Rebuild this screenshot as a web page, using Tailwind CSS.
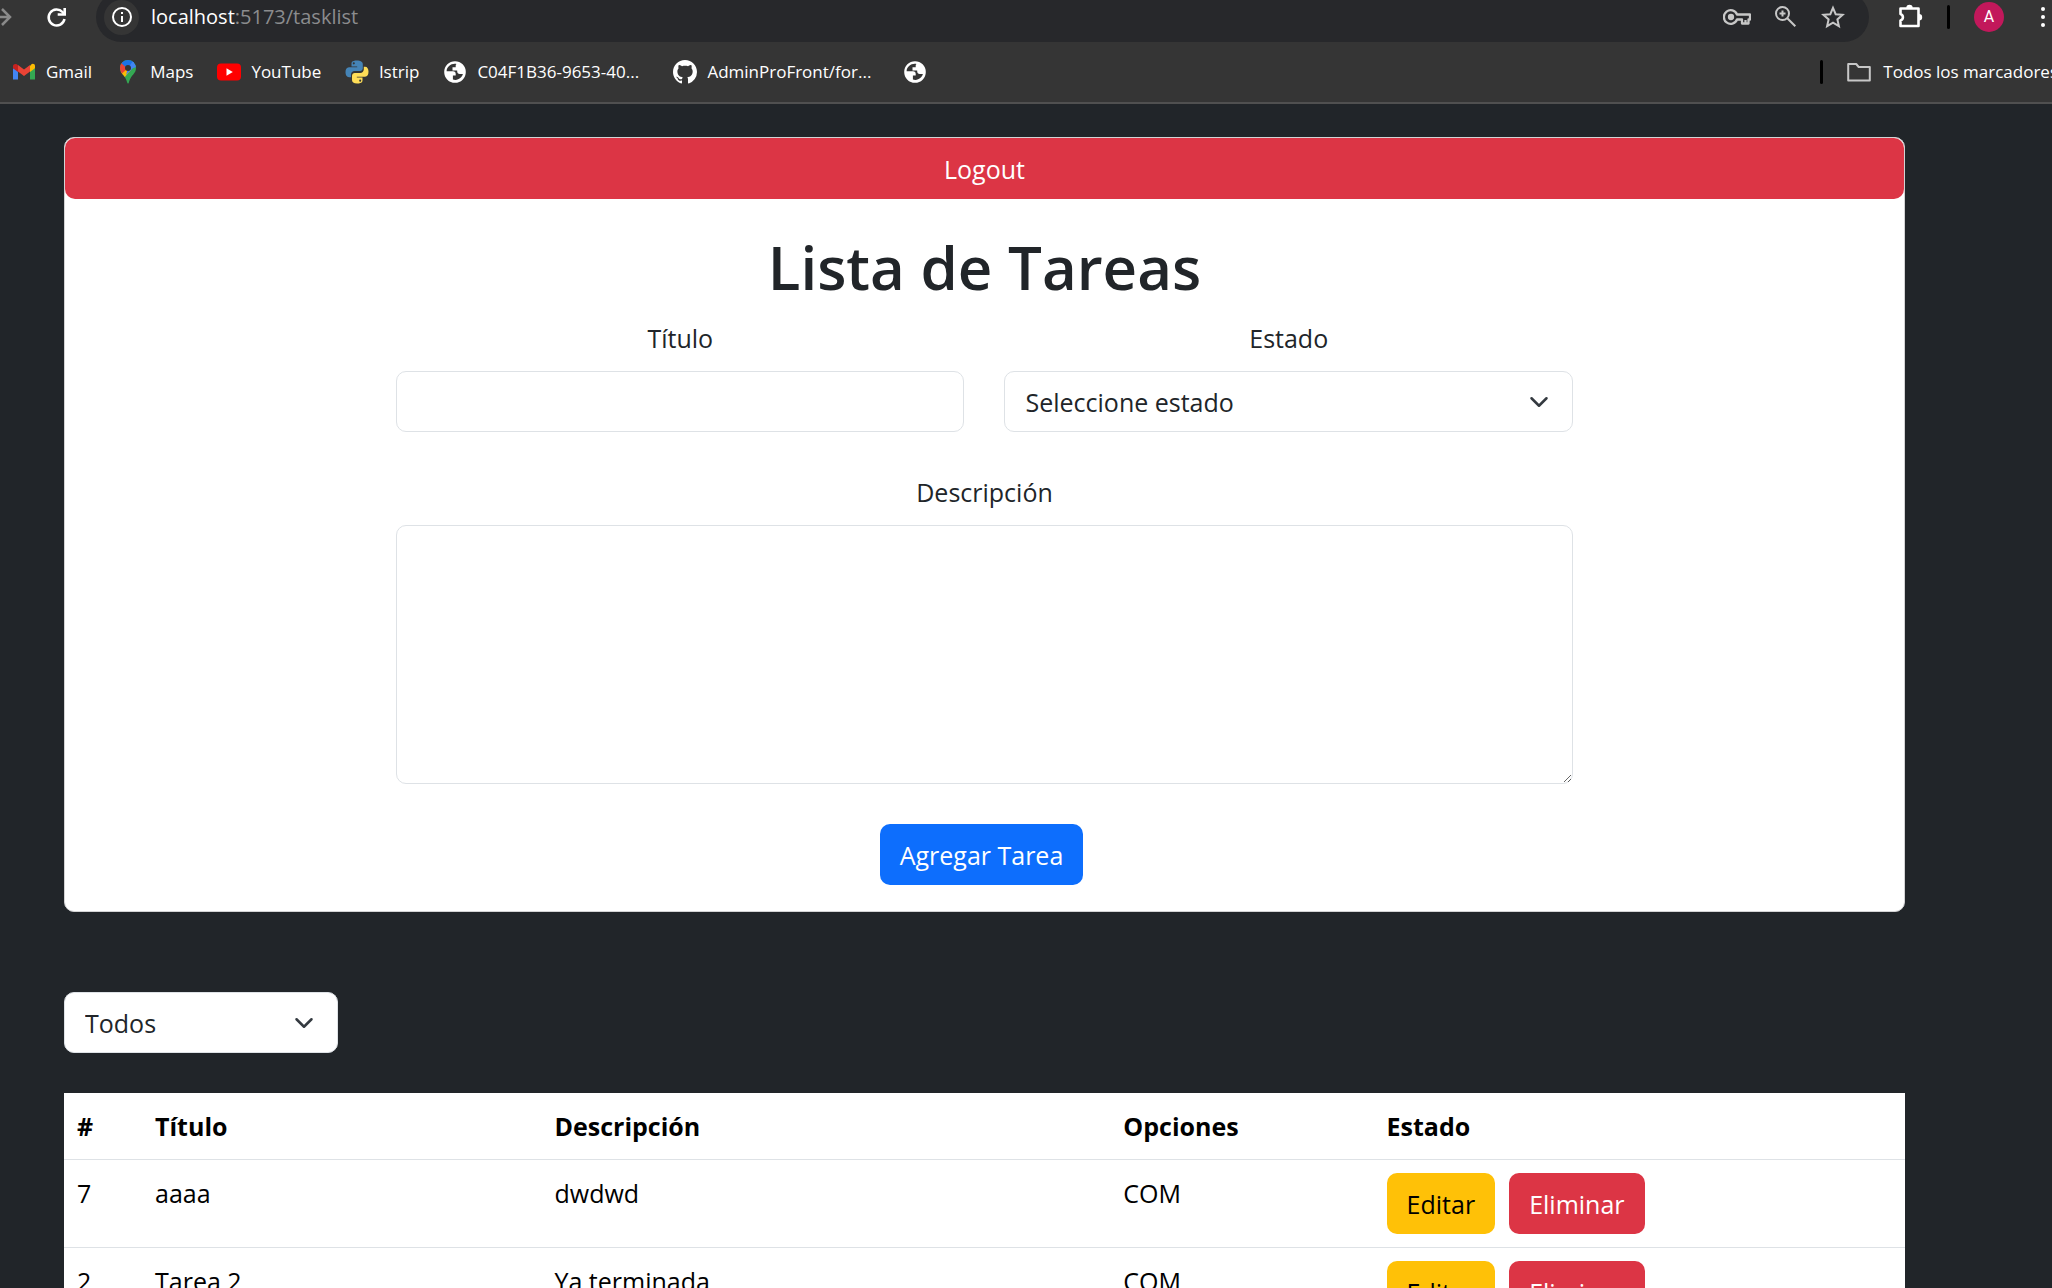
<!DOCTYPE html>
<html lang="es">
<head>
<meta charset="utf-8">
<title>Lista de Tareas</title>
<script src="https://cdn.jsdelivr.net/npm/@tailwindcss/browser@4"></script>
</head>
<body class="h-screen overflow-hidden bg-[#212529] font-['Open_Sans','Noto_Sans',sans-serif] text-[25px] leading-10 text-[#212529]">

<svg class="hidden" aria-hidden="true">
  <symbol id="globe" viewBox="0 0 24 24"><path fill="#fff" fill-rule="evenodd" d="M12 1.2a10.8 10.8 0 1 0 0 21.600a10.800 10.800 0 0 0 0-21.600zM3.600 11.200h6.300c1.900 0 2.800.9 2.800 2.700v1.700H9.900v3.900c.9.300 1.800.5 2.700.4 3.500-.2 6.400-2.600 7.300-5.800h-3.200c-1.500 0-2.500-1-2.500-2.500v-1.100H9.500V7.300h3.200V5.200c0-.5.300-1 .9-1.200-5.200-1-9.800 2.500-10 7.200z"/></symbol>
  <symbol id="chevron" viewBox="0 0 16 16"><path fill="none" stroke="#343a40" stroke-linecap="round" stroke-linejoin="round" stroke-width="2" d="m2 5 6 6 6-6"/></symbol>
</svg>

<!-- Browser toolbar -->
<header class="overflow-hidden border-b-2 border-[#505050] bg-[#353535] text-white">
  <div class="-mt-2 flex h-[50px] items-center text-xl">
    <button class="-ml-3 h-6 w-6" aria-label="Adelante"><svg viewBox="0 0 24 24" class="h-6 w-6" fill="none" stroke="#8a8a8a" stroke-width="2.500"><path d="M2 12h20M14 4l8 8-8 8"/></svg></button>
    <button class="ml-8 h-6 w-6" aria-label="Recargar"><svg viewBox="0 0 24 24" class="h-6 w-6" fill="none" stroke="#fff" stroke-width="2.500"><path d="M20.500 14A8 8 0 1 1 18.500 7L20.500 9.500"/><path d="M20.700 3v6.500h-7" stroke-width="2.600"/></svg></button>
    <div class="ml-7 flex h-full flex-1 items-center rounded-full bg-[#27282b] pl-2">
      <button class="flex h-[35px] w-[35px] items-center justify-center rounded-full bg-[#353535]" aria-label="Información del sitio"><svg viewBox="0 0 20 20" class="h-5 w-5" fill="none" stroke="#fff" stroke-width="2"><circle cx="10" cy="10" r="9"/><path d="M10 9v6M10 5v2"/></svg></button>
      <span class="ml-3 flex-1">localhost<span class="text-[#8b8c8e]">:5173/tasklist</span></span>
      <div class="flex items-center gap-6 pr-6 text-[#c7c7c7]">
        <svg viewBox="0 0 28 20" class="h-5 w-7" fill="none" stroke="currentColor" stroke-width="2.300"><path d="M14 7.500A6.800 6.800 0 1 0 14 12.500h5v4h6.500v-4H27v-5H14z" stroke-linejoin="round"/><circle cx="8" cy="10" r="2" fill="currentColor"/><path d="M22.500 16v-3"/></svg>
        <svg viewBox="0 0 22 22" class="h-[22px] w-[22px]" fill="none" stroke="currentColor" stroke-width="2"><circle cx="7.500" cy="7.500" r="6.500"/><path d="m12.300 12.300 8 8M7.500 4.500v6M4.500 7.500h6"/></svg>
        <svg viewBox="0 0 24 24" class="h-6 w-6" fill="none" stroke="currentColor" stroke-width="2"><path d="m12 2.800 2.700 6.400 6.900.6-5.200 4.600 1.500 6.800-5.900-3.600-5.900 3.600 1.500-6.800-5.200-4.600 6.900-.6z"/></svg>
      </div>
    </div>
    <div class="flex items-center pl-7">
      <button class="h-[26px] w-[26px]" aria-label="Extensiones"><svg viewBox="0 0 26 26" class="h-[26px] w-[26px]"><path d="M4 4.500h17.500v17.500H3.500v-5.500a3.400 3.400 0 0 0 0-6.500V4.500z" fill="none" stroke="#fff" stroke-width="2.600" stroke-linejoin="round"/><path fill="#fff" d="M9.300 4a3.200 3.200 0 0 1 6.400 0zM22 10a3.200 3.200 0 0 1 0 6.400z"/></svg></button>
      <span class="ml-6 h-6 w-[3px] rounded-full bg-black"></span>
      <button class="ml-6 flex h-[30px] w-[30px] items-center justify-center rounded-full bg-[#c2185b] font-[Roboto,sans-serif] text-base" aria-label="Perfil">A</button>
      <button class="ml-[37px] mr-[7px] flex flex-col gap-1" aria-label="Menú"><i class="h-1 w-1 rounded-full bg-white"></i><i class="h-1 w-1 rounded-full bg-white"></i><i class="h-1 w-1 rounded-full bg-white"></i></button>
    </div>
  </div>

  <nav class="flex h-15 items-center gap-6 whitespace-nowrap pl-3 text-[17px]">
    <a href="#" class="flex items-center gap-2.5"><svg viewBox="0 0 24 24" class="h-6 w-6"><path fill="#4285f4" d="M1 8v11.500h5V11z"/><path fill="#34a853" d="M18 11v8.500h5V8z"/><path fill="#fbbc04" d="M18 6v6l5-3.800V6c0-2-2.300-3-3.800-1.600z"/><path fill="#ea4335" d="M6 11.500V5l6 4.600L18 5v6.500L12 16z"/><path fill="#c5221f" d="M1 6v2.200L6 12V5.200C4 3 1 4 1 6z"/></svg>Gmail</a>
    <a href="#" class="flex items-center gap-2.5"><svg viewBox="0 0 24 24" class="h-6 w-6"><clipPath id="pin"><path d="M12 0a8 8 0 0 0-8 8c0 6 5 6.500 7 14 .5 2 1.500 2 2 0 2-7.500 7-8 7-14a8 8 0 0 0-8-8z"/></clipPath><g clip-path="url(#pin)"><path fill="#34a853" d="M0 0h24v24H0z"/><path fill="#fbbc04" d="M4 13 12 4l3 6-8 9-4-3z"/><path fill="#ea4335" d="M3 3 6 2l6 6-7.500 7H3z"/><path fill="#1a73e8" d="M5 3 9-1h8l2 3-7 7z"/><path fill="#4285f4" d="m17 1 4 6-4 1-7 7 2-7z"/></g><circle cx="12" cy="8" r="3" fill="#353535"/></svg>Maps</a>
    <a href="#" class="flex items-center gap-2.5"><svg viewBox="0 0 24 24" class="h-6 w-6"><rect y="3.500" width="24" height="17" rx="4" fill="#f00"/><path fill="#fff" d="M9.500 8.300v7.400l6.300-3.700z"/></svg>YouTube</a>
    <a href="#" class="flex items-center gap-2.5"><svg viewBox="0 0 24 24" class="h-6 w-6"><path fill="#4584b6" d="M11.900.5C6.500.5 6.500 2.800 6.500 4v2.500h5.700v.8H4C1.500 7.300.5 9.500.5 12.300s1.200 4.900 3.500 4.900h2v-2.700c0-2 1.700-3.400 3.500-3.400h5.600c1.500 0 2.700-1.200 2.700-2.800V4c0-2.200-2.400-3.500-5.900-3.500zM8.800 2.300a1 1 0 1 1 0 2.100 1 1 0 0 1 0-2.100z"/><path fill="#ffde57" d="M12.100 23.500c5.400 0 5.400-2.300 5.400-3.500v-2.500h-5.700v-.8H20c2.500 0 3.500-2.200 3.500-5s-1.200-4.900-3.500-4.900h-1.200v2.700c0 2-1.700 3.400-3.500 3.400H9.700C8.200 12.900 7 14.100 7 15.700V20c0 2.200 1.600 3.500 5.100 3.500zm3.100-1.800a1 1 0 1 1 0-2.100 1 1 0 0 1 0 2.100z"/></svg>lstrip</a>
    <a href="#" class="flex w-[206px] items-center gap-2.5"><svg class="h-6 w-6 shrink-0"><use href="#globe"/></svg>C04F1B36-9653-40...</a>
    <a href="#" class="flex w-[206px] items-center gap-2.5"><svg viewBox="0 0 16 16" class="h-6 w-6 shrink-0" fill="#fff"><path d="M8 0C3.580 0 0 3.580 0 8c0 3.540 2.290 6.530 5.470 7.590.4.070.55-.17.55-.38 0-.19-.01-.82-.01-1.490-2.010.37-2.530-.49-2.690-.94-.09-.23-.48-.94-.82-1.130-.28-.15-.68-.52-.01-.53.63-.01 1.080.58 1.230.82.720 1.210 1.870.87 2.330.66.070-.52.280-.87.510-1.070-1.780-.2-3.640-.89-3.640-3.950 0-.87.310-1.590.82-2.150-.08-.2-.36-1.020.08-2.120 0 0 .67-.21 2.200.82.640-.18 1.320-.27 2-.27s1.360.09 2 .27c1.530-1.040 2.200-.82 2.200-.82.440 1.100.16 1.920.08 2.120.51.560.82 1.270.82 2.150 0 3.070-1.870 3.750-3.650 3.950.29.250.54.730.54 1.480 0 1.070-.01 1.930-.01 2.200 0 .21.150.46.550.38A8.010 8.010 0 0 0 16 8c0-4.420-3.580-8-8-8z"/></svg>AdminProFront/for...</a>
    <a href="#" aria-label="Marcador"><svg class="h-6 w-6"><use href="#globe"/></svg></a>
    <span class="ml-auto h-6 w-[3px] rounded-full bg-black"></span>
    <a href="#" class="-mr-1.5 flex items-center gap-3"><svg viewBox="0 0 24 24" class="h-6 w-6" fill="none" stroke="#c7c7c7" stroke-width="2" stroke-linejoin="round"><path d="M1.200 4h8l2.500 3h11.100v13.500H1.200z"/></svg>Todos los marcadores</a>
  </nav>
</header>

<main class="pl-16 pr-[147px] pt-[33px]">
  <section class="rounded-[10px] border border-[#d3d3d4] bg-white text-center">
    <button class="h-[61px] w-full rounded-[10px] bg-[#dc3545] text-white">Logout</button>
    <form class="mx-auto w-[64%] py-[26px]">
      <h1 class="mb-2 text-[60px] font-semibold leading-[85px]">Lista de Tareas</h1>
      <div class="grid grid-cols-2 gap-10">
        <div>
          <label for="titulo" class="mb-[13px] block">Título</label>
          <input id="titulo" type="text" class="block h-[61px] w-full rounded-[10px] border border-[#dee2e6] px-5">
        </div>
        <div>
          <label for="estado" class="mb-[13px] block">Estado</label>
          <div class="grid items-center">
            <select id="estado" class="col-start-1 row-start-1 h-[61px] w-full appearance-none rounded-[10px] border border-[#dee2e6] bg-white px-5">
              <option>Seleccione estado</option>
            </select>
            <svg class="pointer-events-none col-start-1 row-start-1 mr-6 h-5 w-5 justify-self-end"><use href="#chevron"/></svg>
          </div>
        </div>
      </div>
      <label for="descripcion" class="mb-[13px] mt-10 block">Descripción</label>
      <textarea id="descripcion" class="block h-[259px] w-full resize rounded-[10px] border border-[#dee2e6] px-5 py-2.5"></textarea>
      <button type="button" class="mr-1.5 mt-10 h-[61px] rounded-[10px] bg-[#0d6efd] px-5 text-white">Agregar Tarea</button>
    </form>
  </section>

  <div class="mt-20 grid w-[274px] items-center">
    <select aria-label="Filtrar por estado" class="col-start-1 row-start-1 h-[61px] w-full appearance-none rounded-[10px] border border-[#dee2e6] bg-white px-5">
      <option>Todos</option>
    </select>
    <svg class="pointer-events-none col-start-1 row-start-1 mr-6 h-5 w-5 justify-self-end"><use href="#chevron"/></svg>
  </div>

  <table class="mt-10 w-full table-fixed bg-white text-left text-black">
    <colgroup><col class="w-[78px]"><col class="w-[21.700%]"><col class="w-[30.900%]"><col class="w-[14.300%]"><col></colgroup>
    <thead>
      <tr class="border-b border-[#dee2e6]">
        <th class="p-[13px]">#</th><th class="p-[13px]">Título</th><th class="p-[13px]">Descripción</th><th class="p-[13px]">Opciones</th><th class="p-[13px]">Estado</th>
      </tr>
    </thead>
    <tbody class="align-top">
      <tr class="border-b border-[#dee2e6]">
        <td class="p-[13px]">7</td><td class="p-[13px]">aaaa</td><td class="p-[13px]">dwdwd</td><td class="p-[13px]">COM</td>
        <td class="p-[13px]"><div class="flex gap-3.5"><button class="h-[61px] rounded-[10px] bg-[#ffc107] px-5">Editar</button><button class="h-[61px] rounded-[10px] bg-[#dc3545] px-5 text-white">Eliminar</button></div></td>
      </tr>
      <tr class="border-b border-[#dee2e6]">
        <td class="p-[13px]">2</td><td class="p-[13px]">Tarea 2</td><td class="p-[13px]">Ya terminada</td><td class="p-[13px]">COM</td>
        <td class="p-[13px]"><div class="flex gap-3.5"><button class="h-[61px] rounded-[10px] bg-[#ffc107] px-5">Editar</button><button class="h-[61px] rounded-[10px] bg-[#dc3545] px-5 text-white">Eliminar</button></div></td>
      </tr>
    </tbody>
  </table>
</main>
</body>
</html>
